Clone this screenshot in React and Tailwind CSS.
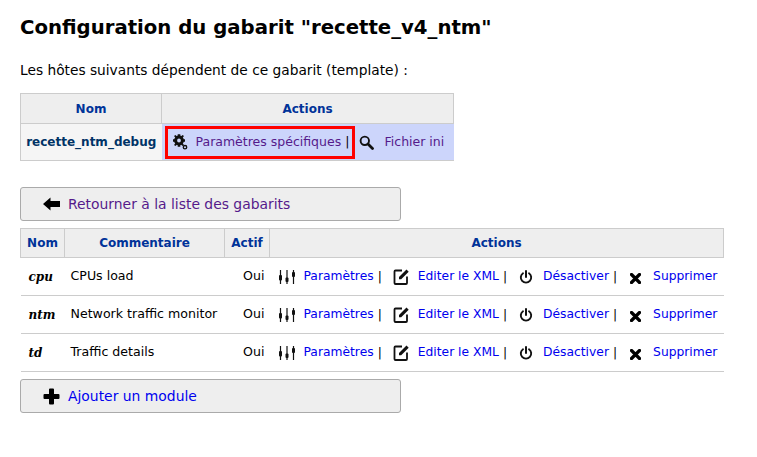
import React from "react";

const Gears = () => (
  <svg width="15" height="16" viewBox="0 0 15 16" className="shrink-0">
    <circle cx="6" cy="6.500" r="3.400" fill="none" stroke="#111" strokeWidth="3" />
    <path d="M4.700 0.300h2.600v2.500H4.700zM4.700 10.200h2.600v2.500H4.700zM0 5.200h2.500v2.600H0zM9.500 5.200h2.500v2.600H9.500z" fill="#111" />
    <path d="M1 2l1.500-1 2 2-1.500 1.500zM11 2L9.500 1l-2 2L9 4.500zM1 11l1.500 1 2-2L3 8.500zM11 11l-1.500 1-2-2L9 8.500z" fill="#111" />
    <circle cx="12" cy="13.200" r="1.700" fill="none" stroke="#111" strokeWidth="1.400" />
  </svg>
);

const Search = () => (
  <svg width="15" height="15" viewBox="0 0 15 15" className="shrink-0">
    <circle cx="5.800" cy="5.800" r="4.200" fill="none" stroke="#111" strokeWidth="1.900" />
    <path d="M9 9l4.500 4.500" stroke="#111" strokeWidth="2.800" strokeLinecap="round" />
  </svg>
);

const ArrowLeft = () => (
  <svg width="17" height="14" viewBox="0 0 17 14" className="shrink-0">
    <path d="M0 7L7.500 0.500V4H17V10H7.500V13.500z" fill="#000" />
  </svg>
);

const Plus = () => (
  <svg width="17" height="17" viewBox="0 0 17 17" className="shrink-0">
    <path d="M6 1.500a1 1 0 0 1 1-1h3a1 1 0 0 1 1 1V6h4.500a1 1 0 0 1 1 1v3a1 1 0 0 1-1 1H11v4.500a1 1 0 0 1-1 1H7a1 1 0 0 1-1-1V11H1.500a1 1 0 0 1-1-1V7a1 1 0 0 1 1-1H6z" fill="#000" />
  </svg>
);

const Sliders = () => (
  <svg width="18" height="16" viewBox="0 0 18 16" className="shrink-0">
    <path d="M2.500 1v14M9 1v14M15.500 1v14" stroke="#111" strokeWidth="1.200" />
    <rect x="1" y="6" width="3" height="5.500" rx="1" fill="#111" />
    <rect x="7.500" y="8.500" width="3" height="4.500" rx="1" fill="#111" />
    <rect x="14" y="3" width="3" height="5" rx="1" fill="#111" />
  </svg>
);

const EditBox = () => (
  <svg width="17" height="17" viewBox="0 0 17 17" className="shrink-0">
    <path d="M9 2.500H2.500a1 1 0 0 0-1 1V15a1 1 0 0 0 1 1H13a1 1 0 0 0 1-1V8.500" fill="none" stroke="#111" strokeWidth="1.800" />
    <path d="M6 9l7.500-7.500 2.200 2.200L8.200 11.200H6z" fill="#111" />
  </svg>
);

const Power = () => (
  <svg width="14" height="14" viewBox="0 0 14 14" className="shrink-0">
    <path d="M4 3.200a5.200 5.200 0 1 0 6 0" fill="none" stroke="#111" strokeWidth="1.900" strokeLinecap="round" />
    <path d="M7 1v6" stroke="#111" strokeWidth="2" strokeLinecap="round" />
  </svg>
);

const Cross = () => (
  <svg width="11" height="11" viewBox="0 0 11 11" className="shrink-0">
    <path d="M1.500 1.500l8 8M9.500 1.500l-8 8" stroke="#000" strokeWidth="3.200" strokeLinecap="round" />
  </svg>
);

const ModuleRow = ({ name, comment }) => (
  <tr className="h-[38px] border-b border-[#cccccc] text-[12.3px]">
    <td className="pl-[8px] font-['DejaVu_Serif',serif] text-[12px] font-bold italic">{name}</td>
    <td className="pl-[6px] text-[12.6px] whitespace-nowrap">{comment}</td>
    <td className="pr-[5px] text-right text-[12.6px]">Oui</td>
    <td className="pl-[8px]">
      <div className="flex items-center whitespace-nowrap">
        <Sliders />
        <a href="#" className="ml-[8px] text-[#0000ee]">Paramètres</a>
        <span className="ml-[4px]">|</span>
        <span className="ml-[11px]"><EditBox /></span>
        <a href="#" className="ml-[8px] text-[#0000ee]">Editer le XML</a>
        <span className="ml-[4px]">|</span>
        <span className="ml-[12px]"><Power /></span>
        <a href="#" className="ml-[10px] text-[#0000ee]">Désactiver</a>
        <span className="ml-[4px]">|</span>
        <span className="ml-[13px] mt-[4px]"><Cross /></span>
        <a href="#" className="ml-[12px] text-[#0000ee]">Supprimer</a>
      </div>
    </td>
  </tr>
);

const App = () => {
  return (
    <div className="h-[457px] w-[757px] overflow-hidden bg-white px-[20px] pt-[14px] font-['DejaVu_Sans',sans-serif] text-black">
      <h1 className="text-[19.7px] leading-[28px] font-bold">Configuration du gabarit "recette_v4_ntm"</h1>
      <p className="mt-[20px] text-[13.75px] leading-[16px]">Les hôtes suivants dépendent de ce gabarit (template) :</p>

      <table className="mt-[15px] w-[434px] table-fixed border-collapse">
        <thead>
          <tr className="h-[30px] border border-[#cccccc] bg-[#eeeeee] text-[12px] font-bold text-[#003399]">
            <th className="w-[141px] border-r border-[#cccccc]">Nom</th>
            <th>Actions</th>
          </tr>
        </thead>
        <tbody>
          <tr className="h-[37px] border-b border-[#cccccc] text-[12.5px]">
            <td className="border-l border-[#cccccc] bg-[#f5f5f5] text-center text-[12px] font-bold text-[#003366]">recette_ntm_debug</td>
            <td className="bg-[#ccd5fb] pl-[3px]">
              <div className="flex items-center whitespace-nowrap">
                <span className="flex h-[33px] w-[190px] items-center border-[3px] border-[#ff0000] pl-[5px]">
                  <Gears />
                  <a href="#" className="ml-[8px] text-[#551a8b]">Paramètres spécifiques</a>
                  <span className="ml-[4px]">|</span>
                </span>
                <span className="ml-[4px]"><Search /></span>
                <a href="#" className="ml-[11px] text-[#551a8b]">Fichier ini</a>
              </div>
            </td>
          </tr>
        </tbody>
      </table>

      <button className="mt-[26px] flex h-[34px] w-[381px] items-center rounded-[3px] border border-[#aaaaaa] bg-[#eeeeee] pl-[22px] text-[13.9px]">
        <ArrowLeft />
        <a href="#" className="ml-[8px] text-[#551a8b]">Retourner à la liste des gabarits</a>
      </button>

      <table className="mt-[7px] w-[704px] table-fixed border-collapse">
        <thead>
          <tr className="h-[29px] border border-[#cccccc] bg-[#eeeeee] text-[12px] font-bold text-[#003399]">
            <th className="w-[44px] border-r border-[#cccccc]">Nom</th>
            <th className="w-[160px] border-r border-[#cccccc]">Commentaire</th>
            <th className="w-[45px] border-r border-[#cccccc]">Actif</th>
            <th>Actions</th>
          </tr>
        </thead>
        <tbody>
          <ModuleRow name="cpu" comment="CPUs load" />
          <ModuleRow name="ntm" comment="Network traffic monitor" />
          <ModuleRow name="td" comment="Traffic details" />
        </tbody>
      </table>

      <button className="mt-[7px] flex h-[34px] w-[381px] items-center rounded-[3px] border border-[#aaaaaa] bg-[#eeeeee] pl-[22px] text-[13.9px]">
        <Plus />
        <a href="#" className="ml-[8px] text-[#0000ee]">Ajouter un module</a>
      </button>
    </div>
  );
};

export default App;
